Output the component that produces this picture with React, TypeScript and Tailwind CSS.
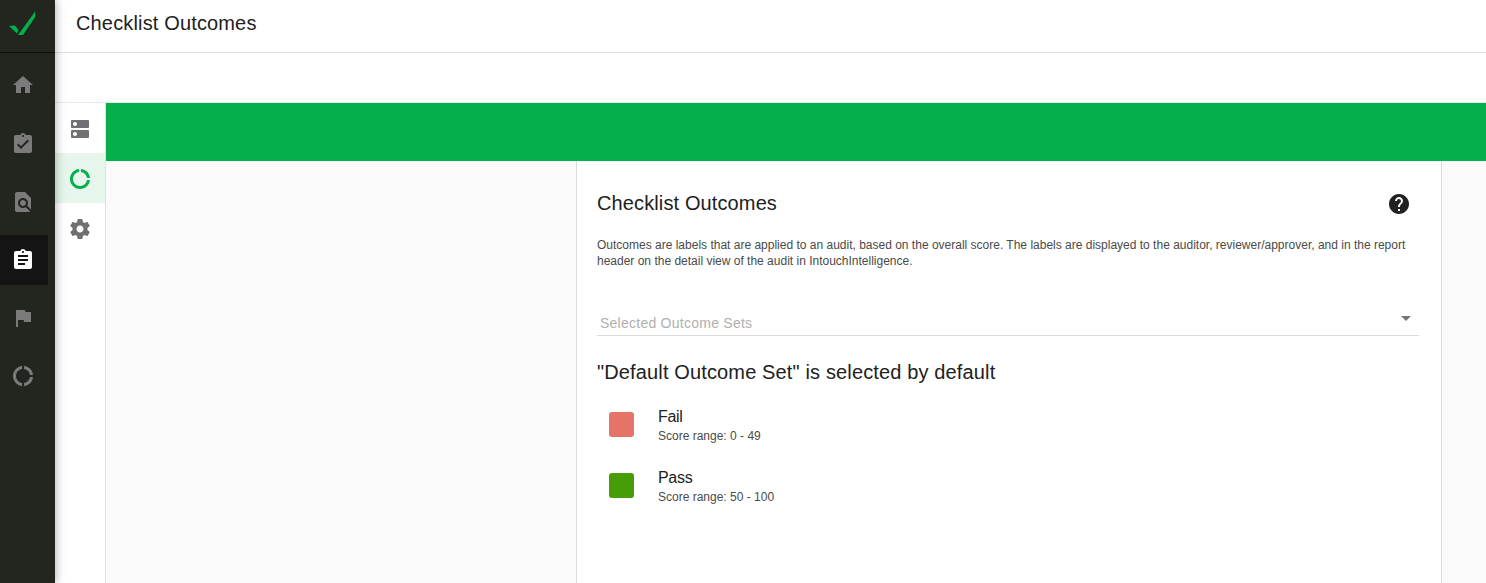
import React from 'react';

const FONT = { fontFamily: '"Liberation Sans", Arial, sans-serif' };

const ICONS = {
  home: 'M10 20v-6h4v6h5v-8h3L12 3 2 12h3v8z',
  turnedIn:
    'M19 3h-4.18C14.4 1.84 13.3 1 12 1c-1.3 0-2.4.84-2.82 2H5c-1.1 0-2 .9-2 2v14c0 1.1.9 2 2 2h14c1.1 0 2-.9 2-2V5c0-1.1-.9-2-2-2zm-7 0c.55 0 1 .45 1 1s-.45 1-1 1-1-.45-1-1 .45-1 1-1zm-2 14l-4-4 1.41-1.41L10 14.17l6.59-6.59L18 9l-8 8z',
  findInPage:
    'M20 19.59V8l-6-6H6c-1.1 0-1.99.9-1.99 2L4 20c0 1.1.89 2 1.99 2H18c.45 0 .85-.15 1.19-.4l-4.43-4.43c-.8.52-1.74.83-2.76.83-2.76 0-5-2.24-5-5s2.24-5 5-5 5 2.24 5 5c0 1.02-.31 1.96-.83 2.75L20 19.59zM9 13c0 1.66 1.34 3 3 3s3-1.34 3-3-1.34-3-3-3-3 1.34-3 3z',
  assignment:
    'M19 3h-4.18C14.4 1.84 13.3 1 12 1c-1.3 0-2.4.84-2.82 2H5c-1.1 0-2 .9-2 2v14c0 1.1.9 2 2 2h14c1.1 0 2-.9 2-2V5c0-1.1-.9-2-2-2zm-7 0c.55 0 1 .45 1 1s-.45 1-1 1-1-.45-1-1 .45-1 1-1zm2 14H7v-2h7v2zm3-4H7v-2h10v2zm0-4H7V7h10v2z',
  flag: 'M14.4 6L14 4H5v17h2v-7h5.6l.4 2h7V6z',
  dns: 'M20 13H4c-.55 0-1 .45-1 1v6c0 .55.45 1 1 1h16c.55 0 1-.45 1-1v-6c0-.55-.45-1-1-1zM7 19c-1.1 0-2-.9-2-2s.9-2 2-2 2 .9 2 2-.9 2-2 2zM20 3H4c-.55 0-1 .45-1 1v6c0 .55.45 1 1 1h16c.55 0 1-.45 1-1V4c0-.55-.45-1-1-1zM7 9c-1.1 0-2-.9-2-2s.9-2 2-2 2 .9 2 2-.9 2-2 2z',
  settings:
    'M19.43 12.98c.04-.32.07-.64.07-.98s-.03-.66-.07-.98l2.11-1.65c.19-.15.24-.42.12-.64l-2-3.46c-.12-.22-.39-.3-.61-.22l-2.49 1c-.52-.4-1.08-.73-1.69-.98l-.38-2.65C14.46 2.18 14.25 2 14 2h-4c-.25 0-.46.18-.49.42l-.38 2.65c-.61.25-1.17.59-1.69.98l-2.49-1c-.23-.09-.49 0-.61.22l-2 3.46c-.13.22-.07.49.12.64l2.11 1.65c-.04.32-.07.65-.07.98s.03.66.07.98l-2.11 1.65c-.19.15-.24.42-.12.64l2 3.46c.12.22.39.3.61.22l2.49-1c.52.4 1.08.73 1.69.98l.38 2.65c.03.24.24.42.49.42h4c.25 0 .46-.18.49-.42l.38-2.65c.61-.25 1.17-.59 1.69-.98l2.49 1c.23.09.49 0 .61-.22l2-3.46c.12-.22.07-.49-.12-.64l-2.11-1.65zM12 15.5c-1.93 0-3.5-1.57-3.5-3.5s1.57-3.5 3.5-3.5 3.5 1.57 3.5 3.5-1.57 3.5-3.5 3.5z',
  help: 'M12 2C6.48 2 2 6.48 2 12s4.48 10 10 10 10-4.48 10-10S17.52 2 12 2zm1 17h-2v-2h2v2zm2.07-7.75l-.9.92C13.45 12.9 13 13.5 13 15h-2v-.5c0-1.1.45-2.1 1.17-2.83l1.24-1.26c.37-.36.59-.86.59-1.41 0-1.1-.9-2-2-2s-2 .9-2 2H8c0-2.21 1.79-4 4-4s4 1.79 4 4c0 .88-.36 1.68-.93 2.25z',
  donut:
    'M11 5.08V2c-5.05.5-9 4.76-9 10s3.95 9.5 9 10v-3.08c-3.39-.49-6-3.39-6-6.92s2.61-6.43 6-6.92zM18.97 11H22c-.47-5-4-8.53-9-9v3.08C16 5.51 18.54 8 18.97 11zM13 18.92V22c5-.47 8.53-4 9-9h-3.03c-.43 3-2.97 5.49-5.97 5.92z',
  // active tab ring: same icon, only the top and right gaps show
  donutActive:
    'M11 5.08V2C5.95 2.5 2 6.76 2 12c0 5.52 4.48 10 10 10 5.2 0 9.5-3.9 10-9h-3.03c-.48 3.4-3.4 6-6.97 6-3.87 0-7-3.13-7-7 0-3.53 2.61-6.43 6-6.92zM18.97 11H22c-.47-5-4-8.53-9-9v3.08C16 5.51 18.54 8 18.97 11z',
};

const MdIcon = ({ d, className }: { d: string; className: string }) => (
  <svg viewBox="0 0 24 24" fill="currentColor" className={className}>
    <path d={d} />
  </svg>
);

const Logo = () => (
  <svg viewBox="8 10 28 26" className="h-[26px] w-[28px]" fill="#05b04c">
    <path d="M9 26 L15 25.5 L18.5 30 L17 33.5 Z" />
    <path d="M18 35 L33 14.5 L35.2 11 L35.2 17 L23 35 Z" />
  </svg>
);

const railItems = [ICONS.home, ICONS.turnedIn, ICONS.findInPage];

const outcomes = [
  { name: 'Fail', range: 'Score range: 0 - 49', color: 'bg-[#e57368]' },
  { name: 'Pass', range: 'Score range: 50 - 100', color: 'bg-[#469d07]' },
];

export default function App() {
  return (
    <div className="flex h-[583px] w-[1486px] overflow-hidden bg-white" style={FONT}>
      {/* left rail */}
      <aside className="z-10 flex w-[55px] shrink-0 flex-col bg-[#22261f] shadow-[2px_0_8px_rgba(0,0,0,0.25)]">
        <div className="h-[53px] shrink-0 border-b border-[#10120f] pl-[8px] pt-[10px]">
          <Logo />
        </div>
        <nav className="flex flex-col pt-[3px]">
          {railItems.map((d) => (
            <div key={d} className="flex h-[58.5px] w-[46px] items-center justify-center text-[#7b7b7b]">
              <MdIcon d={d} className="h-[24px] w-[24px]" />
            </div>
          ))}
          <div className="mt-[3.5px] flex h-[50px] w-[48px] items-center justify-center bg-[#141414] pr-[2px] text-white">
            <MdIcon d={ICONS.assignment} className="h-[24px] w-[24px]" />
          </div>
          <div className="flex h-[66px] w-[46px] items-center justify-center text-[#7b7b7b]">
            <MdIcon d={ICONS.flag} className="h-[24px] w-[24px]" />
          </div>
          <div className="flex h-[50px] w-[46px] items-center justify-center text-[#7b7b7b]">
            <MdIcon d={ICONS.donut} className="h-[24px] w-[24px]" />
          </div>
        </nav>
      </aside>

      <div className="flex min-w-0 flex-1 flex-col">
        <header className="flex h-[53px] shrink-0 items-center border-b border-[#e0e0e0] pb-[7px] pl-[21px]">
          <h1 className="text-[20px] leading-[28px] tracking-[0.15px] text-[#212121]">Checklist Outcomes</h1>
        </header>
        <div className="h-[49px] shrink-0" />

        <div className="flex min-h-0 flex-1 border-t border-[#e8e8e8]">
          {/* secondary tabs */}
          <div className="flex w-[51px] shrink-0 flex-col border-r border-[#e0e0e0]">
            <div className="flex h-[50px] items-center justify-center pt-[2px] text-[#6f7074]">
              <MdIcon d={ICONS.dns} className="h-[24px] w-[24px]" />
            </div>
            <div className="flex h-[50px] items-center justify-center bg-[#e6f6ed] pt-[2px] text-[#05b04c]">
              <MdIcon d={ICONS.donutActive} className="h-[24px] w-[24px]" />
            </div>
            <div className="flex h-[50px] items-center justify-center pt-[2px] text-[#6f7074]">
              <MdIcon d={ICONS.settings} className="h-[24px] w-[24px]" />
            </div>
          </div>

          <div className="flex min-w-0 flex-1 flex-col">
            <div className="h-[58px] shrink-0 bg-[#05b04c]" />
            <div className="flex min-h-0 flex-1 bg-[#fafafa]">
              <div className="w-[470px] shrink-0" />
              <section className="w-[866px] shrink-0 border-x border-[#dcdcdc] bg-white pl-[20px] pr-[22px]">
                <div className="flex items-center justify-between pt-[28px]">
                  <h2 className="text-[20px] leading-[28px] tracking-[0.12px] text-[#212121]">Checklist Outcomes</h2>
                  <MdIcon d={ICONS.help} className="mr-[8px] mt-[2px] h-[24px] w-[24px] text-[#212121]" />
                </div>
                <p className="mt-[20px] text-[12px] leading-[16px] text-[#4a4a4a]">
                  Outcomes are labels that are applied to an audit, based on the overall score. The labels are displayed
                  to the auditor, reviewer/approver, and in the report header on the detail view of the audit in
                  IntouchIntelligence.
                </p>
                <div className="mt-[37px] flex h-[30px] items-center justify-between border-b border-[#dcdcdc] pl-[3px] pr-[8px] pt-[4px]">
                  <span className="text-[14px] leading-[20px] tracking-[0.25px] text-[#b0b0b0]">Selected Outcome Sets</span>
                  <span className="mb-[9px] h-0 w-0 border-x-[5px] border-t-[5px] border-x-transparent border-t-[#757575]" />
                </div>
                <h3 className="mt-[22px] text-[20px] leading-[28px] tracking-[0.14px] text-[#212121]">
                  "Default Outcome Set" is selected by default
                </h3>
                <ul className="mt-[17px] flex flex-col gap-[19px] pl-[12px]">
                  {outcomes.map((o) => (
                    <li key={o.name} className="flex items-center">
                      <span className={`h-[25px] w-[25px] rounded-[3px] ${o.color}`} />
                      <div className="ml-[24px]">
                        <div className="pt-[2px] text-[16px] leading-[23px] tracking-[-0.3px] text-[#212121]">{o.name}</div>
                        <div className="pb-[1px] text-[12px] leading-[16px] text-[#4a4a4a]">{o.range}</div>
                      </div>
                    </li>
                  ))}
                </ul>
              </section>
              <div className="flex-1" />
            </div>
          </div>
        </div>
      </div>
    </div>
  );
}
